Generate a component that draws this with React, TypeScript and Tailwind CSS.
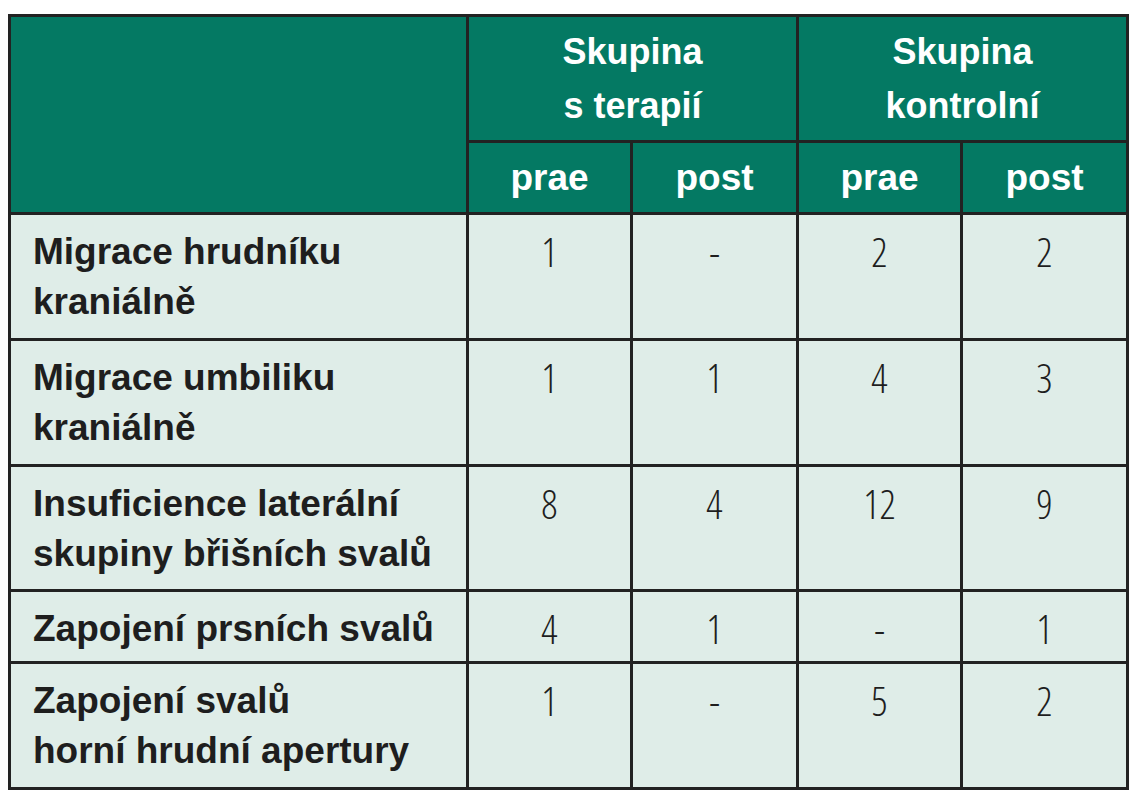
import React from "react";

const rows: { label: string[]; v: string[]; pb: string }[] = [
  { label: ["Migrace hrudníku", "kraniálně"], v: ["1", "-", "2", "2"], pb: "pb-[11px]" },
  { label: ["Migrace umbiliku", "kraniálně"], v: ["1", "1", "4", "3"], pb: "pb-[11px]" },
  { label: ["Insuficience laterální", "skupiny břišních svalů"], v: ["8", "4", "12", "9"], pb: "pb-[10px]" },
  { label: ["Zapojení prsních svalů"], v: ["4", "1", "-", "1"], pb: "pb-[7px]" },
  { label: ["Zapojení svalů", "horní hrudní apertury"], v: ["1", "-", "5", "2"], pb: "pb-[11px]" },
];

export default function App() {
  return (
    <div className="w-[1133px] h-[800px] bg-white pt-[14px] pl-[8px]">
      <table
        className="border-collapse table-fixed w-[1118px] border-[3px] border-[#222]"
        style={{ fontFamily: '"Liberation Sans", Arial, sans-serif' }}
      >
        <colgroup>
          <col className="w-[458px]" />
          <col className="w-[164px]" />
          <col className="w-[166px]" />
          <col className="w-[164px]" />
          <col className="w-[166px]" />
        </colgroup>
        <thead>
          <tr className="h-[126px] bg-[#047963]">
            <th rowSpan={2} className="border-[3px] border-[#222]"></th>
            <th
              colSpan={2}
              className="border-[3px] border-[#222] text-white font-bold text-[36px] leading-[54px] text-center align-middle"
            >
              Skupina
              <br />s terapií
            </th>
            <th
              colSpan={2}
              className="border-[3px] border-[#222] text-white font-bold text-[36px] leading-[54px] text-center align-middle"
            >
              Skupina
              <br />
              kontrolní
            </th>
          </tr>
          <tr className="h-[72px] bg-[#047963]">
            {["prae", "post", "prae", "post"].map((t, i) => (
              <th
                key={i}
                className="border-[3px] border-[#222] text-white font-bold text-[37px] leading-[50px] text-center align-middle"
              >
                {t}
              </th>
            ))}
          </tr>
        </thead>
        <tbody>
          {rows.map((r, i) => (
            <tr key={i} className="bg-[#dfede8]">
              <td
                className={`border-[3px] border-[#222] align-top pt-[12px] ${r.pb} pl-[22px] text-[#1e1e1e] font-bold text-[37px] leading-[50px]`}
              >
                {r.label.map((l, j) => (
                  <div key={j}>{l}</div>
                ))}
              </td>
              {r.v.map((v, j) => (
                <td
                  key={j}
                  className="border-[3px] border-[#222] align-top text-center pt-[12px] text-[#1e1e1e] text-[40px] leading-[50px] font-light"
                  style={{ fontFamily: '"Open Sans", "Liberation Sans", sans-serif', fontStretch: "75%" }}
                >
                  {v}
                </td>
              ))}
            </tr>
          ))}
        </tbody>
      </table>
    </div>
  );
}
